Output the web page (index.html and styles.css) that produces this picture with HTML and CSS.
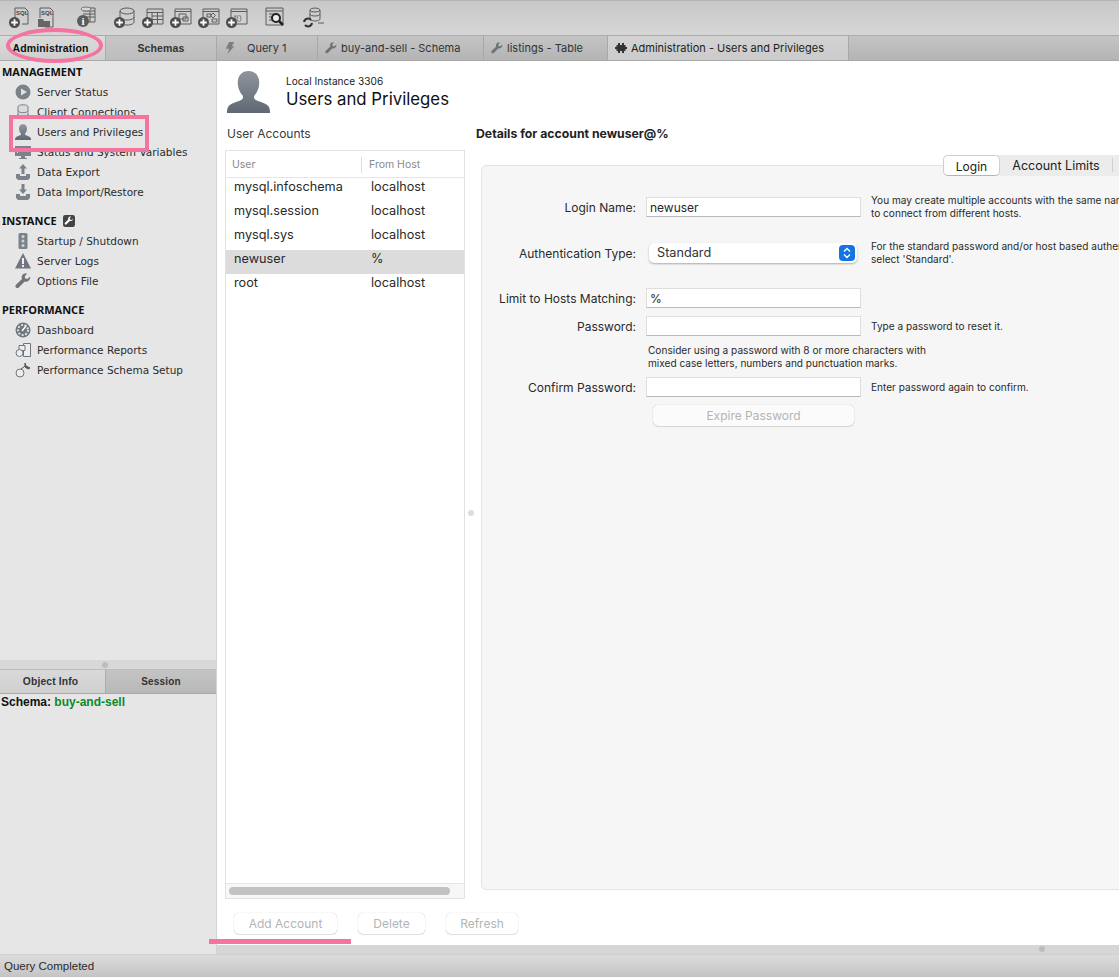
FILE: index.html
```html
<!DOCTYPE html>
<html lang="en">
<head>
    <meta charset="UTF-8">
    <title>MySQL Workbench - Users and Privileges</title>
    <link rel="stylesheet" href="styles.css">
</head>
<body>
<svg class="defs" width="0" height="0">
    <defs>
        <linearGradient id="person-fill" x1="0" y1="0" x2="0" y2="1">
            <stop offset="0" stop-color="#8f959d"/>
            <stop offset="1" stop-color="#5f6873"/>
        </linearGradient>
        <symbol id="person" viewBox="0 0 44 44">
            <path fill="url(#person-fill)" d="M22 1c-7 0-11 5-11 12 0 5 2 10 5 13 1 2 0 4-2 5-4 2-11 3-13 7-1 2-1 4-1 6h44c0-2 0-4-1-6-2-4-9-5-13-7-2-1-3-3-2-5 3-3 5-8 5-13 0-7-4-12-11-12z"/>
        </symbol>
        <symbol id="plus" viewBox="0 0 10 10">
            <circle cx="5" cy="5" r="5" fill="#4d4d4d"/>
            <path d="M5 2v6M2 5h6" stroke="#fff" stroke-width="1.6"/>
        </symbol>
        <symbol id="wrench" viewBox="0 0 16 16">
            <path fill="#6f7379" d="M15 3.4l-2.6 2.500-2.200-.5-.5-2.200L12.200.8c-2-.7-4.100-.1-5 1.500-.7 1.200-.7 2.500-.2 3.600L1 11.700c-.8.800-.8 2 0 2.800s2 .8 2.800 0l5.800-6c1.100.4 2.500.3 3.600-.4 1.500-1 2.300-3 1.800-4.700z"/>
        </symbol>
        <symbol id="stack" viewBox="0 0 16 16">
            <g fill="#d9dbde" stroke="#80858b">
                <ellipse cx="8" cy="3" rx="5" ry="2.200"/>
                <path d="M3 3v9.500c0 1.200 2.200 2.200 5 2.200s5-1 5-2.200V3"/>
                <path fill="none" d="M3 6.500c0 1.200 2.200 2.200 5 2.200s5-1 5-2.200M3 10c0 1.200 2.200 2.200 5 2.200s5-1 5-2.200"/>
            </g>
        </symbol>
    </defs>
</svg>

<div class="app">
    <!-- top toolbar -->
    <div class="toolbar">
        <svg class="tool" viewBox="0 0 22 22"><path class="ln" d="M6 13V2h10l3 3v13h-6"/><text x="7" y="8.500" class="tiny">SQL</text><use href="#plus" x="0" y="11" width="11" height="11"/></svg>
        <svg class="tool gap-s" viewBox="0 0 22 22"><path class="ln" d="M3 12V2h10l3 3v16H8"/><text x="4" y="8.500" class="tiny">SQL</text><path fill="#666" d="M1 13h5l1 2h6v6H1z"/></svg>
        <svg class="tool gap-l" viewBox="0 0 22 22"><path class="ln" d="M7 2h13v14H12M8 5h12M8 8h12M8 11h12M15 5v11"/><ellipse cx="11" cy="3" rx="5" ry="2" fill="#d8d8d8" stroke="#777"/><circle cx="8" cy="15" r="6" fill="#5c5c5c"/><text x="6.500" y="19" class="info">i</text></svg>
        <svg class="tool gap-x" viewBox="0 0 22 22"><g class="ln"><ellipse cx="13" cy="5" rx="7" ry="3"/><path d="M6 5v11c0 1.700 3 3 7 3s7-1.300 7-3V5M6 11c0 1.700 3 3 7 3s7-1.300 7-3"/></g><use href="#plus" x="0" y="11" width="11" height="11"/></svg>
        <svg class="tool gap-s" viewBox="0 0 22 22"><g class="ln"><path d="M5 3h16v15H9M5 3v9M5 6.500h16M10 10h11M10 13.500h11M10 6.500V18M15.500 6.500V18"/></g><use href="#plus" x="0" y="11" width="11" height="11"/></svg>
        <svg class="tool gap-s" viewBox="0 0 22 22"><g class="ln"><path d="M5 3h16v15H9M5 3v9M5 5.500h16"/><path d="M9 8h7v5H9zM13 11h5v4h-5z"/></g><use href="#plus" x="0" y="11" width="11" height="11"/></svg>
        <svg class="tool gap-s" viewBox="0 0 22 22"><g class="ln"><path d="M5 3h16v15H9M5 3v9M5 5.500h16"/><path d="M9 8h4v3H9zM15 7l2.500 2.500L15 12l-2.500-2.500zM14 13h5v3h-5z"/></g><use href="#plus" x="0" y="11" width="11" height="11"/></svg>
        <svg class="tool gap-s" viewBox="0 0 22 22"><g class="ln"><path d="M5 3h16v15H9M5 3v9M5 5.500h16"/></g><text x="8" y="14" class="fn">f()</text><use href="#plus" x="0" y="11" width="11" height="11"/></svg>
        <svg class="tool gap-l" viewBox="0 0 22 22"><g class="ln"><path d="M2 2h17v17H2zM2 5h17M5 8h5M5 11h3M5 14h3"/></g><circle cx="12" cy="12" r="4" fill="#eee" stroke="#222" stroke-width="2"/><path d="M15 15l4 4" stroke="#222" stroke-width="2.500"/></svg>
        <svg class="tool gap-l" viewBox="0 0 22 22"><g class="ln"><ellipse cx="13" cy="4" rx="5" ry="2"/><path d="M8 4v9c0 1.200 2.200 2 5 2s5-.8 5-2V4M8 8c0 1.200 2.200 2 5 2s5-.8 5-2M16 17h6"/></g><path d="M2 16a4 4 0 0 1 7-2M10 17a4 4 0 0 1-7 2" fill="none" stroke="#333" stroke-width="2"/></svg>
    </div>

    <!-- tab strip -->
    <div class="tabstrip">
        <div class="side-tabs">
            <div class="side-tab side-tab-admin">Administration</div>
            <div class="side-tab side-tab-schemas">Schemas</div>
        </div>
        <div class="doc-tabs">
            <div class="doc-tab doc-tab-query">
                <svg class="doc-icon" viewBox="0 0 12 14"><path fill="#7d7d7d" d="M5 0h6L8 5h3l-8 9 2-6H1z"/></svg>
                <span>Query 1</span>
            </div>
            <div class="doc-tab doc-tab-schema">
                <svg class="doc-icon" viewBox="0 0 16 16"><use href="#wrench"/></svg>
                <span>buy-and-sell - Schema</span>
            </div>
            <div class="doc-tab doc-tab-table">
                <svg class="doc-icon" viewBox="0 0 16 16"><use href="#wrench"/></svg>
                <span>listings - Table</span>
            </div>
            <div class="doc-tab doc-tab-active">
                <svg class="doc-icon" viewBox="0 0 12 12"><path fill="#333" d="M3 1h2v2h2V1h2v2h1.500v2H12v2h-1.500v2H9v2H7V9H5v2H3V9H1.500V7H0V5h1.500V3H3z"/></svg>
                <span>Administration - Users and Privileges</span>
            </div>
        </div>
    </div>

    <div class="workspace">
        <!-- left sidebar -->
        <aside class="sidebar">
            <div class="nav">
                <h4 class="nav-title">MANAGEMENT</h4>
                <div class="nav-item">
                    <svg class="nav-icon" viewBox="0 0 16 16"><circle cx="8" cy="8" r="7.500" fill="#7b828a"/><path fill="#dfe1e4" d="M6 4.500l6 3.500-6 3.500z"/></svg>
                    Server Status
                </div>
                <div class="nav-item">
                    <svg class="nav-icon" viewBox="0 0 16 16"><use href="#stack"/></svg>
                    Client Connections
                </div>
                <div class="nav-item">
                    <svg class="nav-icon" viewBox="0 0 44 44"><use href="#person"/></svg>
                    Users and Privileges
                </div>
                <div class="nav-item">
                    <svg class="nav-icon" viewBox="0 0 16 16"><path fill="#7b828a" d="M0 2h16v10H0zM6 12h4v2h2v1H4v-1h2z"/><path d="M2 9l3-3 2 2 3-4 4 3" fill="none" stroke="#dfe1e4"/></svg>
                    Status and System Variables
                </div>
                <div class="nav-item">
                    <svg class="nav-icon" viewBox="0 0 16 16"><path fill="#7b828a" d="M8 0l4 4.500H9.500V10h-3V4.500H4zM1 10h4v2h6v-2h4v4l-2 2H3l-2-2z"/></svg>
                    Data Export
                </div>
                <div class="nav-item">
                    <svg class="nav-icon" viewBox="0 0 16 16"><path fill="#7b828a" d="M6.500 0h3v5.500H12L8 10 4 5.500h2.500zM1 10h4v2h6v-2h4v4l-2 2H3l-2-2z"/></svg>
                    Data Import/Restore
                </div>

                <h4 class="nav-title">INSTANCE
                    <svg class="title-icon" viewBox="0 0 16 16"><rect width="16" height="16" rx="3" fill="#444"/><path fill="#fff" d="M13.500 4.500l-2 2-2-.5-.5-2 2-2c-1.500-.4-3 0-3.800 1.200-.5.900-.5 1.900-.2 2.700L2.600 10.300c-.6.600-.6 1.500 0 2.100s1.500.6 2.100 0l4.400-4.500c.9.300 1.900.2 2.700-.3 1.100-.8 1.700-2.300 1.700-3.600z"/></svg>
                </h4>
                <div class="nav-item">
                    <svg class="nav-icon" viewBox="0 0 16 16"><rect x="3.500" y="0" width="9" height="16" rx="1.500" fill="#7b828a"/><circle cx="8" cy="3.500" r="1.500" fill="#d0d3d6"/><circle cx="8" cy="8" r="1.500" fill="#d0d3d6"/><circle cx="8" cy="12.500" r="1.500" fill="#d0d3d6"/></svg>
                    Startup / Shutdown
                </div>
                <div class="nav-item">
                    <svg class="nav-icon" viewBox="0 0 16 16"><path fill="#6f767e" d="M8 0l8 15.500H0z"/><path d="M8 5v6M8 12v2" stroke="#fff" stroke-width="1.800"/></svg>
                    Server Logs
                </div>
                <div class="nav-item">
                    <svg class="nav-icon" viewBox="0 0 16 16"><use href="#wrench"/></svg>
                    Options File
                </div>

                <h4 class="nav-title">PERFORMANCE</h4>
                <div class="nav-item">
                    <svg class="nav-icon" viewBox="0 0 16 16"><circle cx="8" cy="8" r="7.500" fill="#6f767e"/><circle cx="8" cy="8" r="5" fill="none" stroke="#dfe1e4" stroke-width="2" stroke-dasharray="2 1.500"/><path d="M7 9l4-5" stroke="#fff" stroke-width="1.500"/></svg>
                    Dashboard
                </div>
                <div class="nav-item">
                    <svg class="nav-icon" viewBox="0 0 16 16"><g fill="#eee" stroke="#6f767e"><path d="M8.500 1.500h7v13h-7z"/><path d="M4 3.500h6v5H4z"/><circle cx="4.500" cy="11" r="3.500"/></g></svg>
                    Performance Reports
                </div>
                <div class="nav-item">
                    <svg class="nav-icon" viewBox="0 0 16 16"><circle cx="5" cy="11" r="4" fill="#eee" stroke="#6f767e"/><path d="M6 7l4-3M10 1l1 3 4 2-2 1-3-2z" stroke="#555" fill="#555"/></svg>
                    Performance Schema Setup
                </div>
            </div>

            <div class="side-splitter"><span class="grip"></span></div>
            <div class="info-tabs">
                <div class="side-tab info-tab-object">Object Info</div>
                <div class="side-tab info-tab-session">Session</div>
            </div>
            <div class="info-body">Schema: <span class="schema-name">buy-and-sell</span></div>
        </aside>

        <!-- users and privileges page -->
        <main class="page">
            <header class="page-head">
                <svg class="page-icon" viewBox="0 0 44 44"><use href="#person"/></svg>
                <div>
                    <div class="page-sub">Local Instance 3306</div>
                    <h1 class="page-title">Users and Privileges</h1>
                </div>
            </header>

            <div class="columns">
                <section class="accounts">
                    <h3 class="col-title col-title-accounts">User Accounts</h3>
                    <div class="acc-list">
                        <div class="acc-head">
                            <span class="acc-user">User</span>
                            <span class="acc-host">From Host</span>
                        </div>
                        <div class="acc-rows">
                            <div class="acc-row"><span class="acc-user">mysql.infoschema</span><span class="acc-host">localhost</span></div>
                            <div class="acc-row"><span class="acc-user">mysql.session</span><span class="acc-host">localhost</span></div>
                            <div class="acc-row"><span class="acc-user">mysql.sys</span><span class="acc-host">localhost</span></div>
                            <div class="acc-row selected"><span class="acc-user">newuser</span><span class="acc-host">%</span></div>
                            <div class="acc-row"><span class="acc-user">root</span><span class="acc-host">localhost</span></div>
                        </div>
                        <div class="acc-scroll"><div class="acc-thumb"></div></div>
                    </div>
                </section>

                <div class="col-splitter"><span class="grip"></span></div>

                <section class="details">
                    <h3 class="col-title col-title-bold">Details for account newuser@%</h3>
                    <div class="panel">
                        <div class="seg">
                            <div class="seg-item seg-active">Login</div>
                            <div class="seg-item seg-limits">Account Limits</div>
                        </div>

                        <div class="form-row">
                            <label class="form-label">Login Name:</label>
                            <div class="field">newuser</div>
                            <p class="note">You may create multiple accounts with the same name<br>to connect from different hosts.</p>
                        </div>
                        <div class="form-row row-auth">
                            <label class="form-label">Authentication Type:</label>
                            <div class="select">
                                <span class="select-text">Standard</span>
                                <span class="select-arrows">
                                    <svg width="8" height="12" viewBox="0 0 8 12"><path d="M1 4.500L4 1.500l3 3M1 7.500l3 3 3-3" fill="none" stroke="#fff" stroke-width="1.400"/></svg>
                                </span>
                            </div>
                            <p class="note">For the standard password and/or host based authentication,<br>select 'Standard'.</p>
                        </div>
                        <div class="form-row row-hosts">
                            <label class="form-label">Limit to Hosts Matching:</label>
                            <div class="field">%</div>
                        </div>
                        <div class="form-row row-pass">
                            <label class="form-label">Password:</label>
                            <div class="field"></div>
                            <p class="note">Type a password to reset it.</p>
                        </div>
                        <p class="note pass-hint">Consider using a password with 8 or more characters with<br>mixed case letters, numbers and punctuation marks.</p>
                        <div class="form-row row-confirm">
                            <label class="form-label">Confirm Password:</label>
                            <div class="field"></div>
                            <p class="note">Enter password again to confirm.</p>
                        </div>
                        <div class="btn btn-expire">Expire Password</div>
                    </div>
                </section>
            </div>

            <div class="actions">
                <div class="btn btn-add">Add Account</div>
                <div class="btn btn-delete">Delete</div>
                <div class="btn btn-refresh">Refresh</div>
            </div>
            <div class="page-bottom"><span class="grip"></span></div>
        </main>
    </div>

    <div class="statusbar">Query Completed</div>

    <!-- pink marks drawn over the screenshot -->
    <div class="mark mark-oval"></div>
    <div class="mark mark-box"></div>
    <div class="mark mark-line"></div>
</div>
</body>
</html>
```
FILE: styles.css
```css
/* Workbench window */
html, body {
    margin: 0;
    padding: 0;
}
body {
    width: 1119px;
    height: 977px;
    overflow: hidden;
    background: #fff;
    color: #262626;
    font-family: Inter, "Liberation Sans", sans-serif;
    font-size: 12px;
}
h1, h3, h4, p {
    margin: 0;
    font-weight: normal;
}
.defs {
    position: absolute;
}
.app {
    position: relative;
    width: 1119px;
    height: 977px;
    display: flex;
    flex-direction: column;
}

/* Toolbar */
.toolbar {
    height: 36px;
    padding: 5px 0 0 9px;
    box-sizing: border-box;
    display: flex;
    background: linear-gradient(#c8c8c8, #d6d6d6);
    border-top: 1px solid #b5b5b5;
    border-bottom: 1px solid #acacac;
    flex-shrink: 0;
}
.tool {
    width: 22px;
    height: 22px;
}
.gap-s { margin-left: 6px; }
.gap-l { margin-left: 16px; }
.gap-x { margin-left: 17px; }
.ln {
    fill: none;
    stroke: #5c5c5c;
    stroke-width: 1;
}
.tiny {
    font-family: "Liberation Sans", sans-serif;
    font-size: 6px;
    font-weight: bold;
    fill: #444;
}
.info {
    font-family: "Liberation Serif", serif;
    font-size: 11px;
    font-weight: bold;
    fill: #fff;
}
.fn {
    font-family: "Liberation Sans", sans-serif;
    font-size: 8px;
    fill: #666;
}

/* Tab strip */
.tabstrip {
    height: 25px;
    box-sizing: border-box;
    display: flex;
    flex-shrink: 0;
    border-bottom: 1px solid #a9a9a9;
    background: linear-gradient(#c4c4c4, #b4b4b4);
}
.side-tabs {
    width: 216px;
    display: flex;
    border-right: 1px solid #a9a9a9;
}
.side-tab {
    display: flex;
    align-items: center;
    justify-content: center;
    font-family: "Liberation Sans", sans-serif;
    font-size: 10.500px;
    font-weight: bold;
    letter-spacing: 0.15px;
    color: #333;
}
.side-tab-admin {
    width: 106px;
    box-sizing: border-box;
    padding-right: 4px;
    background: linear-gradient(#dadada, #cfcfcf);
    border-right: 1px solid #acacac;
    color: #111;
}
.side-tab-schemas {
    flex: 1;
    background: linear-gradient(#c6c6c6, #bdbdbd);
}
.doc-tabs {
    flex: 1;
    display: flex;
}
.doc-tab {
    display: flex;
    align-items: center;
    gap: 4px;
    box-sizing: border-box;
    padding-left: 7px;
    font-size: 11px;
    color: #333;
    border-right: 1px solid #a8a8a8;
}
.doc-tab-query {
    width: 101px;
    gap: 11px;
}
.doc-tab-schema { width: 166px; }
.doc-tab-table { width: 124px; }
.doc-tab-active {
    width: 241px;
    background: linear-gradient(#d3d3d3, #cbcbcb);
    color: #222;
}
.doc-icon {
    width: 12px;
    height: 12px;
    flex-shrink: 0;
}

/* Workspace */
.workspace {
    flex: 1;
    display: flex;
    min-height: 0;
}
.sidebar {
    width: 216px;
    flex-shrink: 0;
    display: flex;
    flex-direction: column;
    background: #e6e6e6;
    border-right: 1px solid #d4d4d4;
}
.nav {
    flex: 1;
    padding-top: 4px;
    font-family: "DejaVu Sans", sans-serif;
    font-size: 10.500px;
    color: #2b2b2b;
}
.nav-title {
    height: 14px;
    line-height: 14px;
    margin: 12px 0 3px 2px;
    font-family: "Noto Sans", sans-serif;
    font-size: 11px;
    font-weight: bold;
    color: #111;
    display: flex;
    align-items: center;
    gap: 6px;
}
.nav-title:first-child {
    margin-top: 0;
}
.title-icon {
    width: 12px;
    height: 12px;
}
.nav-item {
    height: 20px;
    display: flex;
    align-items: center;
    gap: 6px;
    padding-left: 15px;
    white-space: nowrap;
}
.nav-icon {
    width: 16px;
    height: 16px;
    flex-shrink: 0;
}
.side-splitter {
    height: 9px;
    padding-right: 6px;
    background: #d8d8d8;
    display: flex;
    align-items: center;
    justify-content: center;
}
.grip {
    display: block;
    width: 6px;
    height: 6px;
    border-radius: 50%;
    background: #bdbdbd;
}
.info-tabs {
    height: 25px;
    display: flex;
    border-top: 1px solid #bdbdbd;
    border-bottom: 1px solid #aaa;
    box-sizing: border-box;
}
.info-tab-object {
    width: 106px;
    box-sizing: border-box;
    padding-right: 4px;
    font-size: 10.300px;
    background: linear-gradient(#dadada, #cfcfcf);
    border-right: 1px solid #acacac;
}
.info-tab-session {
    flex: 1;
    font-size: 10px;
    background: linear-gradient(#c4c4c4, #b8b8b8);
}
.info-body {
    height: 260px;
    box-sizing: border-box;
    padding: 1px 0 0 1px;
    font-family: "Liberation Sans", sans-serif;
    font-size: 12px;
    font-weight: bold;
    color: #111;
}
.schema-name {
    color: #0a8a2a;
}

/* Users and Privileges page */
.page {
    flex: 1;
    min-width: 0;
    display: flex;
    flex-direction: column;
}
.page-head {
    height: 65px;
    box-sizing: border-box;
    padding: 9px 0 0 10px;
    display: flex;
    gap: 16px;
    flex-shrink: 0;
}
.page-icon {
    width: 43px;
    height: 43px;
}
.page-sub {
    margin-top: 5px;
    font-size: 10.100px;
    line-height: 12px;
    color: #222;
}
.page-title {
    margin-top: 1px;
    font-size: 16.800px;
    line-height: 23px;
    color: #111;
}
.columns {
    flex: 1;
    min-height: 0;
    display: flex;
}
.accounts {
    width: 240px;
    margin-left: 8px;
    flex-shrink: 0;
    display: flex;
    flex-direction: column;
}
.col-title {
    height: 24px;
    line-height: 15px;
    font-size: 12px;
    flex-shrink: 0;
}
.col-title-accounts {
    padding-left: 2px;
    color: #3a3a3a;
}
.col-title-bold {
    font-size: 12.250px;
    font-weight: bold;
    color: #222;
}
.acc-list {
    flex: 1;
    display: flex;
    flex-direction: column;
    border: 1px solid #e2e2e2;
    box-sizing: border-box;
}
.acc-head {
    height: 26px;
    padding-top: 1px;
    box-sizing: content-box;
    height: 25px;
    display: flex;
    align-items: center;
    border-bottom: 1px solid #e6e6e6;
    flex-shrink: 0;
    font-size: 10.500px;
    color: #8a8a8a;
}
.acc-head .acc-user {
    width: 136px;
    padding-left: 6px;
    height: 16px;
    line-height: 16px;
    box-sizing: border-box;
    border-right: 1px solid #ddd;
    margin-right: 7px;
}
.acc-rows {
    flex: 1;
}
.acc-row {
    height: 24px;
    box-sizing: border-box;
    padding-top: 1px;
    display: flex;
    line-height: 16px;
    font-size: 12.700px;
    color: #2a2a2a;
}
.acc-row .acc-user {
    width: 145px;
    padding-left: 8px;
    box-sizing: border-box;
}
.acc-row.selected {
    background: #dcdcdc;
}
.acc-scroll {
    height: 14px;
    background: #f7f7f7;
    border-top: 1px solid #e6e6e6;
    display: flex;
    align-items: center;
    padding-left: 3px;
    flex-shrink: 0;
}
.acc-thumb {
    width: 221px;
    height: 8px;
    border-radius: 4px;
    background: #c2c2c2;
}
.col-splitter {
    width: 11px;
    flex-shrink: 0;
    display: flex;
    align-items: center;
    justify-content: center;
}
.col-splitter .grip {
    background: #dcdcdc;
}
.details {
    flex: 1;
    min-width: 0;
    overflow: hidden;
    display: flex;
    flex-direction: column;
    padding-bottom: 9px;
}
.panel {
    position: relative;
    width: 720px;
    margin: 15px 0 0 5px;
    padding-top: 31px;
    flex: 1;
    box-sizing: border-box;
    background: #f6f6f6;
    border: 1px solid #e4e4e4;
    border-radius: 5px;
}

/* Segmented control sits across the panel's top edge */
.seg {
    position: absolute;
    top: -11px;
    left: 461px;
    height: 21px;
    width: 230px;
    display: flex;
    background: #ececec;
    border-radius: 5px;
    font-size: 12px;
}
.seg-item {
    line-height: 21px;
    text-align: center;
    color: #222;
}
.seg-active {
    width: 57px;
    box-sizing: border-box;
    line-height: 21px;
    background: #fff;
    border: 1px solid #cfcfcf;
    border-bottom-color: #b5b5b5;
    border-radius: 5px;
}
.seg-limits {
    width: 112px;
    height: 14px;
    line-height: 15px;
    margin-top: 3px;
    font-size: 12.500px;
    border-right: 1px solid #cfcfcf;
}

/* Login form */
.form-row {
    height: 20px;
    display: flex;
    align-items: center;
}
.row-auth { margin-top: 26px; }
.row-hosts { margin-top: 25px; }
.row-pass { margin-top: 8px; }
.row-confirm { margin-top: 7px; }
.form-label {
    width: 154px;
    flex-shrink: 0;
    text-align: right;
    font-size: 12px;
    color: #2a2a2a;
}
.row-auth .form-label,
.row-confirm .form-label {
    padding-top: 1px;
}
.field {
    width: 215px;
    height: 20px;
    margin-left: 10px;
    padding-left: 3px;
    box-sizing: border-box;
    flex-shrink: 0;
    line-height: 19px;
    font-size: 12px;
    background: #fff;
    border: 1px solid #dedede;
    border-bottom-color: #b9b9b9;
}
.select {
    width: 208px;
    height: 20px;
    margin: 0 4px 0 13px;
    padding: 0 2px 0 8px;
    box-sizing: border-box;
    flex-shrink: 0;
    display: flex;
    align-items: center;
    justify-content: space-between;
    font-size: 12.700px;
    color: #333;
    background: #fff;
    border-radius: 5px;
    box-shadow: 0 1px 2px rgba(0, 0, 0, 0.3);
}
.select-text {
    margin-top: -1px;
}
.select-arrows {
    width: 16px;
    height: 16px;
    border-radius: 4px;
    background: #1673e6;
    display: flex;
    align-items: center;
    justify-content: center;
}
.note {
    margin-left: 10px;
    font-size: 10.100px;
    line-height: 13px;
    color: #2a2a2a;
    white-space: nowrap;
}
.row-confirm .note {
    padding-top: 1px;
}
.pass-hint {
    margin: 8px 0 0 166px;
}
.btn {
    height: 21px;
    line-height: 21px;
    box-sizing: border-box;
    text-align: center;
    font-size: 12px;
    color: #b4b4b4;
    background: #fff;
    border-radius: 5px;
    box-shadow: 0 0 1px rgba(0, 0, 0, 0.3), 0 1px 1px rgba(0, 0, 0, 0.1);
}
.btn-expire {
    width: 201px;
    margin: 8px 0 0 171px;
    background: #fbfbfb;
}
.actions {
    height: 46px;
    padding: 14px 0 0 17px;
    box-sizing: border-box;
    display: flex;
    flex-shrink: 0;
}
.btn-add { width: 103px; }
.btn-delete { width: 67px; margin-left: 21px; }
.btn-refresh { width: 72px; margin-left: 21px; }
.page-bottom {
    height: 9px;
    flex-shrink: 0;
    background: #d6d6d6;
    position: relative;
}
.page-bottom .grip {
    position: absolute;
    left: 822px;
    top: 1px;
}

/* Status bar */
.statusbar {
    height: 23px;
    line-height: 23px;
    padding-left: 4px;
    flex-shrink: 0;
    font-family: "Liberation Sans", sans-serif;
    font-size: 11.500px;
    color: #2a2a2a;
    background: linear-gradient(#dcdcdc, #c4c4c4);
    border-top: 1px solid #cfcfcf;
    box-sizing: border-box;
}

/* Pink annotation marks */
.mark {
    position: absolute;
    box-sizing: border-box;
    pointer-events: none;
}
.mark-oval {
    left: 6px;
    top: 28px;
    width: 97px;
    height: 35px;
    border: 4px solid #f4739f;
    border-radius: 50%;
}
.mark-box {
    left: 9px;
    top: 115px;
    width: 140px;
    height: 37px;
    border: 4px solid #f4739f;
}
.mark-line {
    left: 209px;
    top: 939px;
    width: 142px;
    height: 5px;
    background: #f4739f;
}
```
